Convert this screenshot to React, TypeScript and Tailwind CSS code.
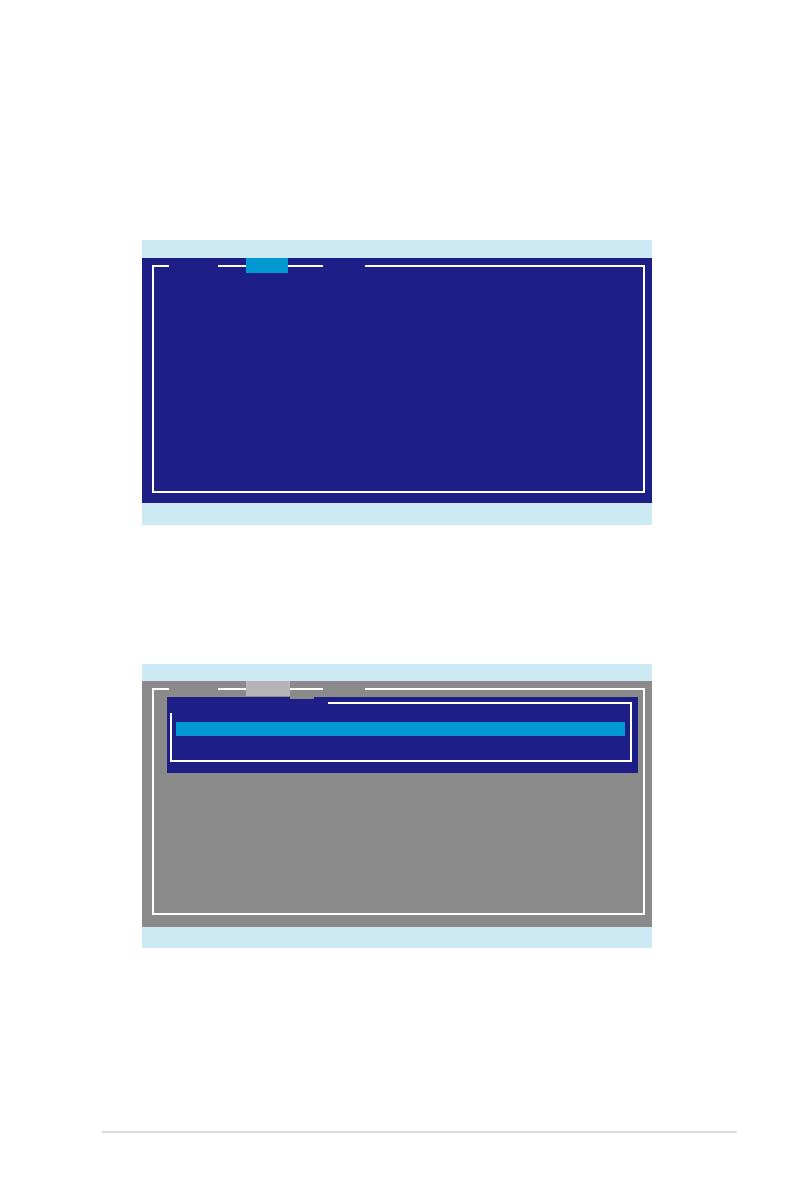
import React from "react";

function TopRow() {
  return (
    <div className="flex h-[2px] shrink-0">
      <div className="w-[15px] bg-white" />
      <div className="w-[49px]" />
      <div className="w-[105px] bg-white" />
      <div className="w-[42px]" />
      <div className="flex-1 bg-white" />
    </div>
  );
}

export default function App() {
  return (
    <div className="w-[794px] h-[1196px] bg-white flex flex-col" style={{ fontFamily: '"Liberation Sans", sans-serif' }}>
      {/* Screen 1 */}
      <div className="mt-[240px] ml-[142px] w-[510px] flex flex-col">
        <div className="h-[18px] bg-[#cde9f4]" />
        <div className="relative h-[245px] bg-[#1e1f86] pt-[7px] pl-[10px]">
          <div className="w-[493px] h-[228px] border-x-2 border-b-2 border-white flex flex-col">
            <TopRow />
          </div>
          <div className="absolute left-[104px] top-0 w-[42px] h-[15px] bg-[#0099d4]" />
        </div>
        <div className="h-[22px] bg-[#cde9f4]" />
      </div>

      {/* Screen 2 */}
      <div className="mt-[139px] ml-[142px] w-[510px] flex flex-col">
        <div className="h-[17px] bg-[#cde9f4]" />
        <div className="relative h-[246px] bg-[#8a8a8a] pt-[7px] pl-[10px]">
          <div className="w-[493px] h-[227px] border-x-2 border-b-2 border-white flex flex-col">
            <TopRow />
            <div className="pl-[13px] pt-[7px]">
              <div className="w-[471px] h-[76px] bg-[#1e1f86] pl-[3px] pt-[5px]">
                <div className="w-[462px] h-[60px] border-r-2 border-b-2 border-white flex flex-col">
                  <div className="h-[2px] ml-[158px] bg-white shrink-0" />
                  <div className="flex-1 flex">
                    <div className="w-[2px] mt-[9px] bg-white" />
                    <div className="flex-1 pl-[4px] pr-[5px] pt-[18px]">
                      <div className="h-[14px] bg-[#0099d4]" />
                    </div>
                  </div>
                </div>
              </div>
            </div>
          </div>
          <div className="absolute left-[104px] top-0 w-[44px] h-[15px] bg-[#b4b4b4]" />
          <div className="absolute left-[148px] top-[15px] w-[24px] h-[3px] bg-[#8a8a8a]" />
        </div>
        <div className="h-[21px] bg-[#cde9f4]" />
      </div>

      {/* Footer rule */}
      <div className="mt-[183px] ml-[102px] w-[635px] h-[2px] bg-[#dcdcdc]" />
    </div>
  );
}
